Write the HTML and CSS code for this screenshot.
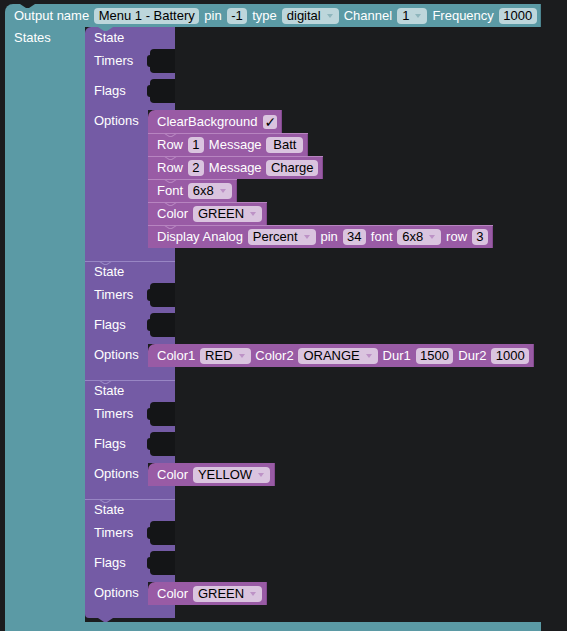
FILE: index.html
```html
<!DOCTYPE html>
<html>
<head>
<meta charset="utf-8">
<title>Blocks</title>
<link rel="stylesheet" href="styles.css">
</head>
<body>
<div class="workspace">
  <div class="out-block">
    <div class="out-head">
      <span>Output name</span>
      <span class="fld fld-t">Menu 1 - Battery</span>
      <span>pin</span>
      <span class="fld fld-t">-1</span>
      <span>type</span>
      <span class="fld fld-t dd">digital<i class="arrow"></i></span>
      <span>Channel</span>
      <span class="fld fld-t dd">1<i class="arrow"></i></span>
      <span>Frequency</span>
      <span class="fld fld-t">1000</span>
    </div>
    <div class="out-body">
      <div class="out-arm">States</div>
      <div class="state-stack">

        <div class="state state-first">
          <div class="s-title">State</div>
          <div class="s-row s-input"><span class="s-lbl">Timers</span><span class="socket"></span></div>
          <div class="s-gap"></div>
          <div class="s-row s-input"><span class="s-lbl">Flags</span><span class="socket"></span></div>
          <div class="s-gap s-gap-b"></div>
          <div class="s-opts">
            <span class="s-lbl">Options</span>
            <div class="opt-stack">
              <div class="opt"><span>ClearBackground</span><span class="fld fld-p chk">✓</span></div>
              <div class="opt"><span>Row</span><span class="fld fld-p">1</span><span>Message</span><span class="fld fld-p txt">Batt</span></div>
              <div class="opt"><span>Row</span><span class="fld fld-p">2</span><span>Message</span><span class="fld fld-p txt">Charge</span></div>
              <div class="opt"><span>Font</span><span class="fld fld-p dd">6x8<i class="arrow"></i></span></div>
              <div class="opt"><span>Color</span><span class="fld fld-p dd">GREEN<i class="arrow"></i></span></div>
              <div class="opt"><span>Display Analog</span><span class="fld fld-p dd">Percent<i class="arrow"></i></span><span>pin</span><span class="fld fld-p">34</span><span>font</span><span class="fld fld-p dd">6x8<i class="arrow"></i></span><span>row</span><span class="fld fld-p">3</span></div>
            </div>
          </div>
          <div class="s-bottom"></div>
        </div>

        <div class="state">
          <div class="s-title">State</div>
          <div class="s-row s-input"><span class="s-lbl">Timers</span><span class="socket"></span></div>
          <div class="s-gap"></div>
          <div class="s-row s-input"><span class="s-lbl">Flags</span><span class="socket"></span></div>
          <div class="s-gap s-gap-b"></div>
          <div class="s-opts">
            <span class="s-lbl">Options</span>
            <div class="opt-stack">
              <div class="opt"><span>Color1</span><span class="fld fld-p dd">RED<i class="arrow"></i></span><span>Color2</span><span class="fld fld-p dd">ORANGE<i class="arrow"></i></span><span>Dur1</span><span class="fld fld-p">1500</span><span>Dur2</span><span class="fld fld-p">1000</span></div>
            </div>
          </div>
          <div class="s-bottom"></div>
        </div>

        <div class="state">
          <div class="s-title">State</div>
          <div class="s-row s-input"><span class="s-lbl">Timers</span><span class="socket"></span></div>
          <div class="s-gap"></div>
          <div class="s-row s-input"><span class="s-lbl">Flags</span><span class="socket"></span></div>
          <div class="s-gap s-gap-b"></div>
          <div class="s-opts">
            <span class="s-lbl">Options</span>
            <div class="opt-stack">
              <div class="opt"><span>Color</span><span class="fld fld-p dd">YELLOW<i class="arrow"></i></span></div>
            </div>
          </div>
          <div class="s-bottom"></div>
        </div>

        <div class="state state-last">
          <div class="s-title">State</div>
          <div class="s-row s-input"><span class="s-lbl">Timers</span><span class="socket"></span></div>
          <div class="s-gap"></div>
          <div class="s-row s-input"><span class="s-lbl">Flags</span><span class="socket"></span></div>
          <div class="s-gap s-gap-b"></div>
          <div class="s-opts">
            <span class="s-lbl">Options</span>
            <div class="opt-stack">
              <div class="opt"><span>Color</span><span class="fld fld-p dd">GREEN<i class="arrow"></i></span></div>
            </div>
          </div>
          <div class="s-bottom"></div>
        </div>

      </div>
    </div>
    <div class="out-foot"></div>
  </div>
</div>
</body>
</html>
```

FILE: styles.css
```css
html, body {
  margin: 0;
  height: 100%;
}
body {
  background: #1b1c1e;
  font-family: "Liberation Sans", Arial, sans-serif;
  font-size: 13px;
  color: #fff;
  overflow: hidden;
}
.workspace {
  padding: 4px 0 0 5px;
}
.out-block {
  display: inline-flex;
  flex-direction: column;
}
.out-head {
  position: relative;
  display: flex;
  align-items: center;
  gap: 5px;
  height: 23px;
  padding: 0 4.5px 0 9px;
  background: #5b9aa5;
  border-top-left-radius: 8px;
  white-space: nowrap;
  box-shadow: inset -1px 0 0 #4d8590;
}
.out-head::before {
  content: "";
  position: absolute;
  left: 15px;
  top: 0;
  width: 15px;
  height: 4px;
  background: #1b1c1e;
  clip-path: polygon(0 0, 15px 0, 9px 4px, 6px 4px);
}
.fld {
  display: inline-flex;
  align-items: center;
  flex: none;
  height: 16px;
  padding: 0 4.5px;
  border-radius: 4px;
  color: #000;
}
.fld-t { background: #bdd6db; }
.fld-p { background: #dac4df; }
.dd {
  padding: 0 6px 0 5px;
  gap: 6px;
}
.arrow {
  width: 0;
  height: 0;
  border-left: 3.5px solid transparent;
  border-right: 3.5px solid transparent;
  border-top: 4px solid #8fb6bd;
}
.fld-p .arrow { border-top-color: #bd92c6; }
.txt {
  min-width: 37px;
  justify-content: center;
  box-sizing: border-box;
}
.chk {
  width: 14px;
  height: 14px;
  padding: 0;
  justify-content: center;
  border-radius: 3px;
  font-family: "DejaVu Sans", sans-serif;
  font-size: 14px;
  margin-left: 1px;
}
.out-body {
  display: flex;
}
.out-arm {
  width: 80px;
  flex: none;
  box-sizing: border-box;
  padding-left: 9px;
  line-height: 22px;
  background: #5b9aa5;
}
.state-stack {
  display: flex;
  flex-direction: column;
  padding-bottom: 4px;
}
.state {
  width: 90px;
  display: flex;
  flex-direction: column;
}
.s-title {
  position: relative;
  height: 22px;
  line-height: 21px;
  padding-left: 9px;
  background: #745ba5;
  box-shadow: inset 0 1px 0 #9886c4;
}
.s-title::before {
  content: "";
  position: absolute;
  left: 13px;
  top: 0;
  width: 15px;
  height: 5px;
  background: #9886c4;
  clip-path: polygon(0 0, 6px 4px, 9px 4px, 15px 0, 13.4px 0, 8.5px 3px, 6.5px 3px, 1.6px 0);
}
.state-first .s-title {
  box-shadow: none;
  border-top-left-radius: 6px;
}
.state-first .s-title::before {
  background: #5b9aa5;
  clip-path: polygon(0 0, 15px 0, 9px 4px, 6px 4px);
}
.s-row {
  display: flex;
  background: #745ba5;
}
.s-input { height: 24px; }
.s-lbl {
  width: 63px;
  flex: none;
  box-sizing: border-box;
  padding-left: 9px;
  line-height: 23px;
  background: #745ba5;
}
.socket {
  position: relative;
  flex: none;
  width: 25px;
  margin-left: 2px;
  background: #141517;
  border-radius: 4px 0 0 4px;
}
.socket::before {
  content: "";
  position: absolute;
  left: -3px;
  top: 6px;
  width: 5px;
  height: 12px;
  background: #141517;
  border-radius: 3px 0 0 3px;
}
.s-gap {
  height: 6px;
  background: #745ba5;
}
.s-gap-b { height: 7px; }
.s-opts {
  display: flex;
}
.s-opts .s-lbl {
  line-height: 22px;
}
.opt-stack {
  position: relative;
  flex: none;
  display: flex;
  flex-direction: column;
  align-items: flex-start;
}
.opt-stack::after {
  content: "";
  position: absolute;
  left: 0;
  top: 100%;
  width: 27px;
  height: 3px;
  background: #101012;
  border-bottom-left-radius: 4px;
}
.opt {
  position: relative;
  display: flex;
  align-items: center;
  gap: 4.8px;
  height: 23px;
  padding: 0 5px 0 9px;
  background: #995ba5;
  white-space: nowrap;
  box-shadow: inset 0 1px 0 #b784c0, inset -1px 0 0 #84498f;
}
.opt:first-child {
  border-top-left-radius: 7px;
  box-shadow: inset -1px 0 0 #84498f;
}
.opt + .opt::before {
  content: "";
  position: absolute;
  left: 15px;
  top: 0;
  width: 15px;
  height: 5px;
  background: #b784c0;
  clip-path: polygon(0 0, 6px 4px, 9px 4px, 15px 0, 13.4px 0, 8.5px 3px, 6.5px 3px, 1.6px 0);
}
.s-bottom {
  position: relative;
  height: 13px;
  background: #745ba5;
}
.state-last .s-bottom {
  border-bottom-left-radius: 4px;
}
.state-last .s-bottom::after {
  content: "";
  position: absolute;
  left: 13px;
  top: 100%;
  width: 15px;
  height: 4px;
  background: #745ba5;
  clip-path: polygon(0 0, 15px 0, 9px 4px, 6px 4px);
}
.out-foot {
  height: 14px;
  background: #5b9aa5;
}
```
